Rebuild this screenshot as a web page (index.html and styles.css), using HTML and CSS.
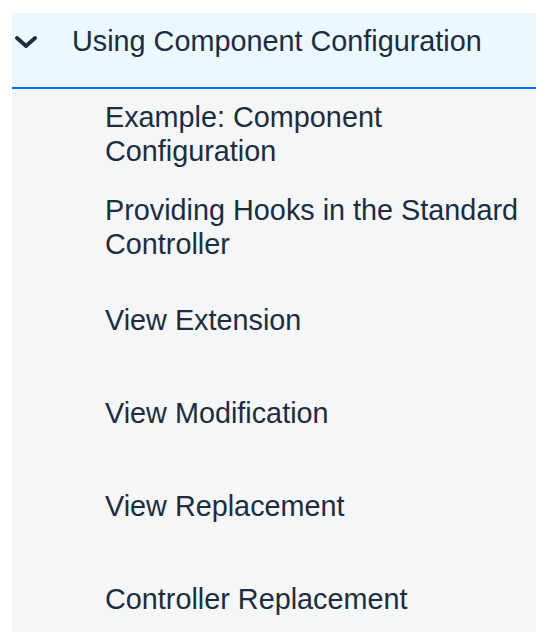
FILE: index.html
```html
<!DOCTYPE html>
<html lang="en">
<head>
<meta charset="utf-8">
<title>Navigation</title>
<link rel="stylesheet" href="styles.css">
</head>
<body>
<nav class="panel">
  <div class="group-header">
    <span class="chevron">
      <svg width="22" height="12" viewBox="0 0 22 12" aria-hidden="true">
        <path d="M2 2 L11 10 L20 2" fill="none" stroke="#1d2d3e" stroke-width="3.8" stroke-linecap="round" stroke-linejoin="round"/>
      </svg>
    </span>
    <span class="group-title">Using Component Configuration</span>
  </div>
  <ul class="items">
    <li class="item">Example: Component Configuration</li>
    <li class="item">Providing Hooks in the Standard Controller</li>
    <li class="item">View Extension</li>
    <li class="item">View Modification</li>
    <li class="item">View Replacement</li>
    <li class="item">Controller Replacement</li>
  </ul>
</nav>
</body>
</html>
```

FILE: styles.css
```css
html, body {
  margin: 0;
  padding: 0;
  background: #ffffff;
}

body {
  font-family: "Liberation Sans", Arial, sans-serif;
  color: #1d2d3e;
}

.panel {
  margin: 13px 8px 0 12px;
  width: 524px;
  height: 619px;
  overflow: hidden;
  background: #f5f6f7;
}

.group-header {
  display: flex;
  align-items: flex-start;
  box-sizing: content-box;
  height: 63px;
  padding: 11px 0 0 3px;
  background: #ebf8ff;
  border-bottom: 2px solid #0070f2;
}

.chevron {
  display: flex;
  align-items: center;
  width: 57px;
  height: 34px;
}

.chevron svg {
  display: block;
  margin-top: 1px;
}

.group-title {
  font-size: 28.8px;
  line-height: 34px;
  white-space: nowrap;
}

.items {
  list-style: none;
  margin: 0;
  padding: 0;
}

.item {
  display: flex;
  align-items: center;
  box-sizing: border-box;
  height: 93px;
  padding: 0 6px 3px 93px;
  font-size: 28.8px;
  line-height: 34px;
}
```
